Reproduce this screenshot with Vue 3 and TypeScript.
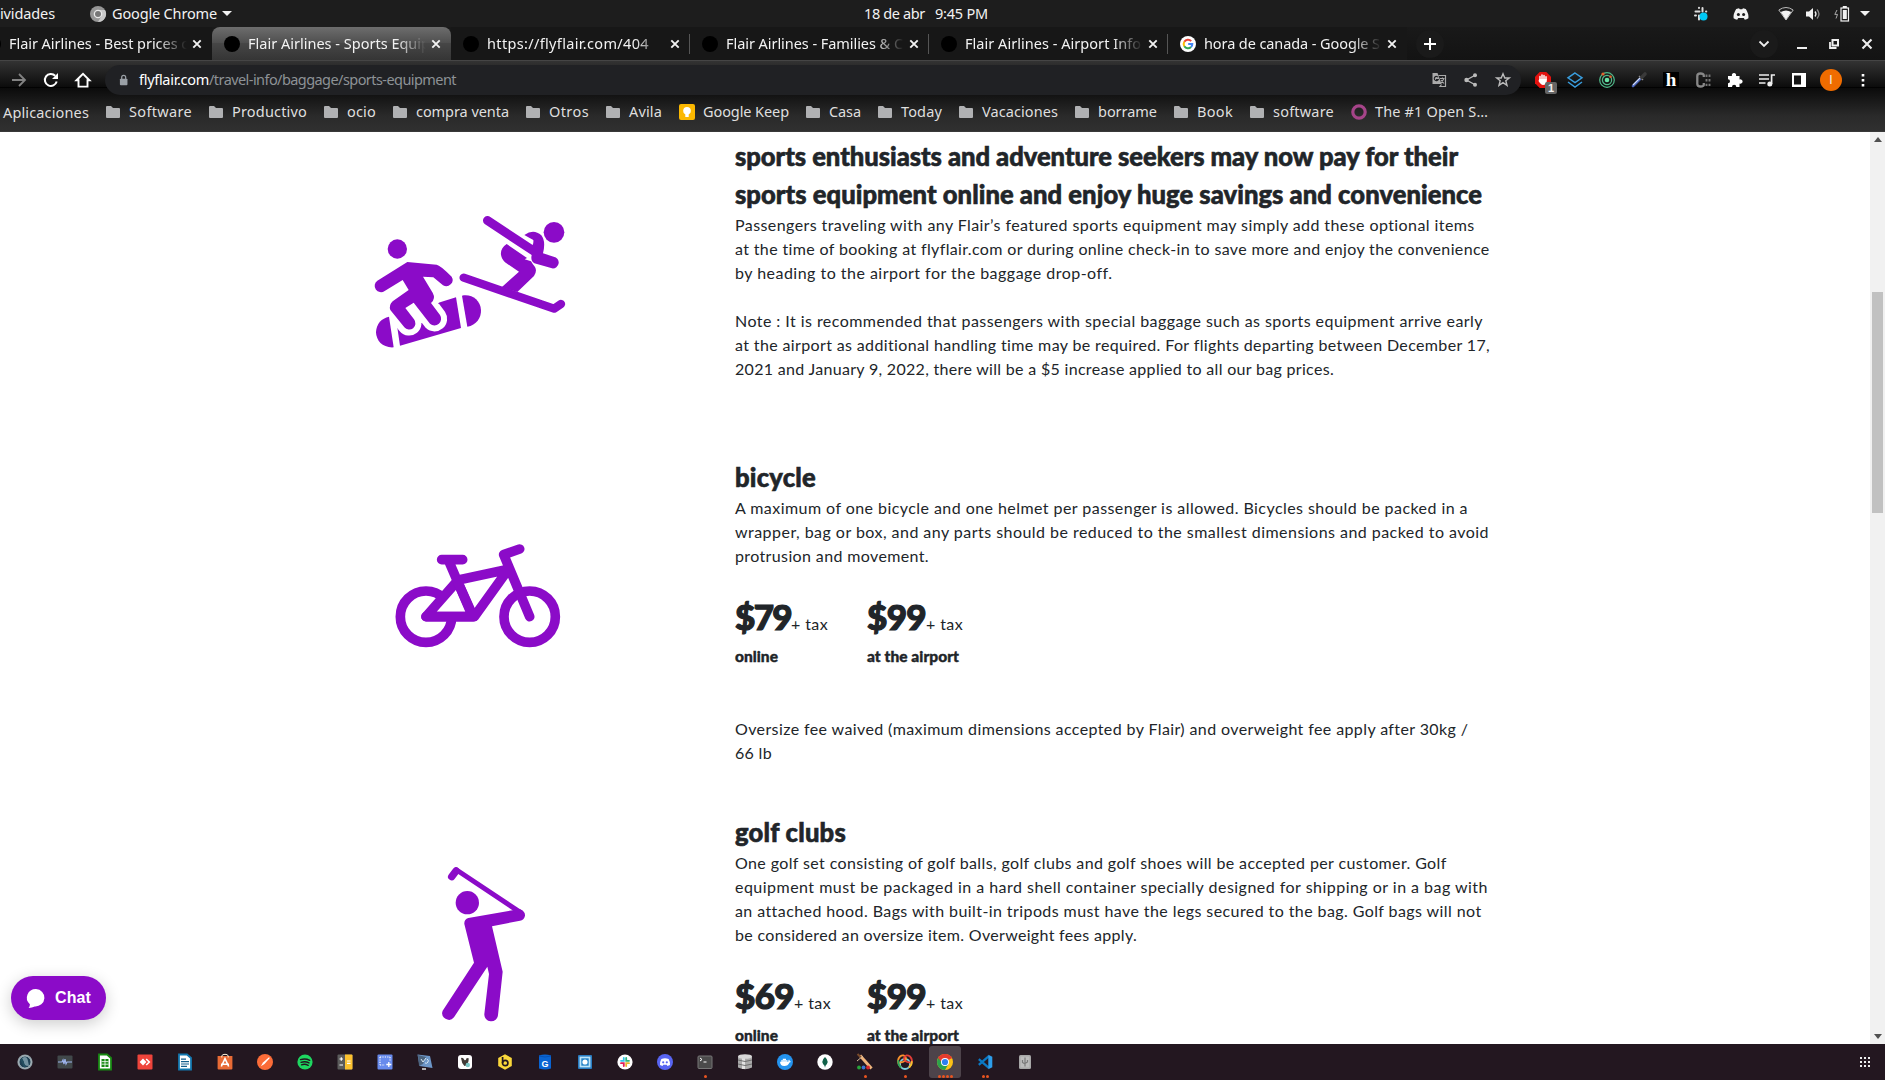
<script setup lang="ts">
interface Tab { title: string; width: number; google?: boolean; active?: boolean; divider?: boolean }
interface Bookmark { label: string; width: number; kind: 'folder' | 'keep' | 'ring' }
interface Line { text: string; width: number }
interface Price { amount: string; width: number; place: string; placeWidth: number; column: number }
interface DockItem { name: string; art: string; dots: number; active?: boolean }

// Tracks a single line of text so that it spans the given number of pixels.
const vFit = {
  mounted(el: HTMLElement, binding: { value: number }) {
    const natural = el.getBoundingClientRect().width
    const count = (el.textContent ?? '').length
    if (count > 0) el.style.letterSpacing = `${(binding.value - natural) / count}px`
  },
}

const tabs: Tab[] = [
  { title: 'Flair Airlines - Best prices o', width: 181 },
  { title: 'Flair Airlines - Sports Equip', width: 182, active: true },
  { title: 'https://flyflair.com/404', width: 162, divider: true },
  { title: 'Flair Airlines - Families & C', width: 177, divider: true },
  { title: 'Flair Airlines - Airport Info', width: 176, divider: true },
  { title: 'hora de canada - Google S', width: 176, google: true },
]

const bookmarks: Bookmark[] = [
  { label: 'Software', width: 63, kind: 'folder' },
  { label: 'Productivo', width: 75, kind: 'folder' },
  { label: 'ocio', width: 29, kind: 'folder' },
  { label: 'compra venta', width: 93, kind: 'folder' },
  { label: 'Otros', width: 40, kind: 'folder' },
  { label: 'Avila', width: 33, kind: 'folder' },
  { label: 'Google Keep', width: 86, kind: 'keep' },
  { label: 'Casa', width: 32, kind: 'folder' },
  { label: 'Today', width: 41, kind: 'folder' },
  { label: 'Vacaciones', width: 76, kind: 'folder' },
  { label: 'borrame', width: 59, kind: 'folder' },
  { label: 'Book', width: 36, kind: 'folder' },
  { label: 'software', width: 61, kind: 'folder' },
  { label: 'The #1 Open S…', width: 113, kind: 'ring' },
]

const introHeading: Line[] = [
  { text: 'sports enthusiasts and adventure seekers may now pay for their', width: 723 },
  { text: 'sports equipment online and enjoy huge savings and convenience', width: 747 },
]
const intro: Line[] = [
  { text: 'Passengers traveling with any Flair’s featured sports equipment may simply add these optional items', width: 740 },
  { text: 'at the time of booking at flyflair.com or during online check-in to save more and enjoy the convenience', width: 755 },
  { text: 'by heading to the airport for the baggage drop-off.', width: 377 },
]
const introNote: Line[] = [
  { text: 'Note : It is recommended that passengers with special baggage such as sports equipment arrive early', width: 748 },
  { text: 'at the airport as additional handling time may be required. For flights departing between December 17,', width: 756 },
  { text: '2021 and January 9, 2022, there will be a $5 increase applied to all our bag prices.', width: 599 },
]
const bicycle: Line[] = [
  { text: 'A maximum of one bicycle and one helmet per passenger is allowed. Bicycles should be packed in a', width: 733 },
  { text: 'wrapper, bag or box, and any parts should be reduced to the smallest dimensions and packed to avoid', width: 754 },
  { text: 'protrusion and movement.', width: 194 },
]
const oversize: Line[] = [
  { text: 'Oversize fee waived (maximum dimensions accepted by Flair) and overweight fee apply after 30kg /', width: 733 },
  { text: '66 lb', width: 37 },
]
const golf: Line[] = [
  { text: 'One golf set consisting of golf balls, golf clubs and golf shoes will be accepted per customer. Golf', width: 712 },
  { text: 'equipment must be packaged in a hard shell container specially designed for shipping or in a bag with', width: 753 },
  { text: 'an attached hood. Bags with built-in tripods must have the legs secured to the bag. Golf bags will not', width: 746 },
  { text: 'be considered an oversize item. Overweight fees apply.', width: 402 },
]
const bikePrices: Price[] = [
  { amount: '$79', width: 56, place: 'online', placeWidth: 43, column: 132 },
  { amount: '$99', width: 59, place: 'at the airport', placeWidth: 92, column: 140 },
]
const golfPrices: Price[] = [
  { amount: '$69', width: 59, place: 'online', placeWidth: 43, column: 132 },
  { amount: '$99', width: 59, place: 'at the airport', placeWidth: 92, column: 140 },
]

const chrome = '<circle cx="8" cy="8" r="8" fill="#fbc116"/><path d="M8 8L1.1 4A8 8 0 0 1 14.9 4Z" fill="#e33b2e"/><path d="M8 8L1.1 4A8 8 0 0 0 8 16L11.5 10Z" fill="#2ba24c"/><path d="M1.1 4L4.6 10L8 4.2Z" fill="#2ba24c"/><path d="M8 4.2H14.9A8 8 0 0 0 1.1 4L4.4 8Z" fill="#e33b2e"/><circle cx="8" cy="8" r="4" fill="#fff"/><circle cx="8" cy="8" r="3.1" fill="#2d7ff0"/>'

const dock: DockItem[] = [
  { name: 'timeshift', dots: 0, art: '<circle cx="8" cy="8" r="7.6" fill="#90a0a7"/><circle cx="8" cy="8" r="6" fill="#1f4154" stroke="#c4ced1" stroke-width=".7"/><path d="M5 4Q10 1 11 7L12 12Q6 12 7 8Z" fill="#7292a0"/><path d="M4 5L8 13" stroke="#244f60" stroke-width="2"/>' },
  { name: 'monitor', dots: 0, art: '<rect x=".5" y="1.5" width="15" height="13" rx="1" fill="#41484a"/><path d="M1 8H5L6 6L7 10L8 5L9 10L10 8H15" fill="none" stroke="#9fb5ee" stroke-width="1.2"/>' },
  { name: 'calc', dots: 0, art: '<path d="M2 .5H10L14 4V15.5H2Z" fill="#fff" stroke="#188a12" stroke-width="1.8"/><path d="M4.5 5H11.5V13H4.5Z" fill="#188a12"/><path d="M4.5 7.6H11.5M4.5 10.2H11.5M8 5V13" stroke="#fff" stroke-width=".8"/>' },
  { name: 'anydesk', dots: 0, art: '<rect x=".5" y=".5" width="15" height="15" rx="1" fill="#ef443b"/><path d="M6 4.6L9.4 8L6 11.4L2.6 8Z" fill="#fff"/><path d="M9.2 5L12.3 8L9.2 11" fill="none" stroke="#fff" stroke-width="1.6"/>' },
  { name: 'writer', dots: 0, art: '<path d="M2 .5H10L14 4V15.5H2Z" fill="#fff" stroke="#1378b0" stroke-width="1.8"/><path d="M4 5.2H9M4 7.6H12M4 10H12M4 12.4H10" stroke="#125d8b" stroke-width="1.2"/>' },
  { name: 'software', dots: 0, art: '<path d="M.6 2H15.4V14.5Q15.4 15.5 14.4 15.5H1.6Q.6 15.5 .6 14.5Z" fill="#e86b35"/><path d="M4.8 3.5V2Q5 .3 8 .3Q11 .3 11.2 2V3.5" fill="none" stroke="#fff3dc" stroke-width="1"/><path d="M4.3 12.5L8 4.6L11.7 12.5M4 10.3H12" fill="none" stroke="#fff" stroke-width="1.6"/>' },
  { name: 'postman', dots: 0, art: '<circle cx="8" cy="8" r="8" fill="#fb6c38"/><path d="M3.8 12.2L6 8.5L12 3.2L12.8 4L7.5 10Z" fill="#fff"/>' },
  { name: 'spotify', dots: 0, art: '<circle cx="8" cy="8" r="7.6" fill="#1ed760"/><path d="M3.5 5.6Q8.5 4 12.7 6.3M4 8.3Q8.3 6.8 12 8.9M4.5 10.8Q8 9.6 11.2 11.3" fill="none" stroke="#231720" stroke-width="1.4" stroke-linecap="round"/>' },
  { name: 'calculator', dots: 0, art: '<rect x=".5" y=".5" width="15" height="15" rx="1" fill="#5b5b5b"/><path d="M8 .5H14.5Q15.5 .5 15.5 1.5V14.5Q15.5 15.5 14.5 15.5H8Z" fill="#fdc22f"/><path d="M2.5 5H6M4.3 3.2V6.8M2.5 11H6M10 7H13.5M10 9.3H13.5" stroke="#fff" stroke-width="1.2"/>' },
  { name: 'screenshot', dots: 0, art: '<rect x=".5" y=".5" width="15" height="15" rx="1" fill="#688bed"/><path d="M3 3H13M3 3V11M13 3V7M3 11H8" stroke="#fff" stroke-width="1.2" stroke-dasharray="1.2 1.2"/><path d="M11.8 8V13M9.3 10.5H14.3" stroke="#fff" stroke-width="1.3"/>' },
  { name: 'tools', dots: 0, art: '<path d="M.5 .5L13 2L15.5 14L2.5 12Z" fill="#6d97c8"/><path d="M1 1L9 3L6 10L2 12Z" fill="#4c647e"/><path d="M4 5L6 8L9 4M8 9A2.2 2.2 0 1 0 10 5" fill="none" stroke="#d7e7f2"/><path d="M5 15H9" stroke="#b1b1b1" stroke-width="2"/>' },
  { name: 'dbeaver', dots: 0, art: '<rect x="1" y="1" width="14" height="14" rx="3" fill="#fff"/><path d="M4 4Q6 3 7.4 6Q9 7 9.5 4.2L11.5 4Q12.3 8 9 11.5L7.4 12Q4.5 9 4 4Z" fill="#423b37"/><circle cx="10.8" cy="11" r="2.2" fill="#7bc8c7"/>' },
  { name: 'beekeeper', dots: 0, art: '<path d="M8 .2L14.8 4V12L8 15.8L1.2 12V4Z" fill="#fad83b"/><circle cx="8.2" cy="9" r="2.7" fill="none" stroke="#231720" stroke-width="1.7"/><path d="M5.6 3V9" stroke="#231720" stroke-width="1.7"/>' },
  { name: 'gdocs', dots: 0, art: '<path d="M2 1.5Q8 -.5 14 1.5V14.5Q8 16.5 2 14.5Z" fill="#0964d2"/><path d="M2 2Q8 4 14 2" fill="none" stroke="#0551b5"/><text x="8" y="12.5" text-anchor="middle" fill="#fff" font-family="Liberation Sans" font-size="9" font-weight="700">G</text>' },
  { name: 'vm', dots: 0, art: '<rect x="1" y="1" width="14" height="14" rx="1" fill="#287cc1"/><rect x="2.6" y="2.6" width="10.8" height="10.8" fill="#bce5fa"/><rect x="4.3" y="4.3" width="7.4" height="7.4" fill="#2584c8"/><circle cx="8" cy="8" r="2.6" fill="#fff"/>' },
  { name: 'slack', dots: 0, art: '<circle cx="8" cy="8" r="7.6" fill="#fff"/><g fill="none" stroke-width="1.8" stroke-linecap="round"><path d="M6.8 4V6.8H4" stroke="#36c5f0"/><path d="M9.2 4V6.8H12" stroke="#2eb67d"/><path d="M6.8 12V9.2H4" stroke="#e01e5a"/><path d="M9.2 12V9.2H12" stroke="#ecb22e"/></g>' },
  { name: 'discord', dots: 0, art: '<circle cx="8" cy="8" r="8" fill="#5865f2"/><path d="M4.4 5Q8 3.5 11.6 5Q13.4 8 13 11L10.5 12L9.7 10.8H6.3L5.5 12L3 11Q2.6 8 4.4 5Z" fill="#fff"/><circle cx="6.2" cy="8.3" r="1.1" fill="#5865f2"/><circle cx="9.8" cy="8.3" r="1.1" fill="#5865f2"/>' },
  { name: 'terminal', dots: 1, art: '<rect x="1" y="2" width="14" height="12.5" rx="1" fill="#4b4b4b" stroke="#777"/><path d="M3 4L5 5.5L3 7M6.5 8H9.5" fill="none" stroke="#fff"/>' },
  { name: 'database', dots: 0, art: '<path d="M1 2.5V13.5Q8 17 15 13.5V2.5Z" fill="#aaa"/><path d="M5 3V15H8V3Z" fill="#e2e2e2"/><path d="M1 6Q8 9 15 6M1 10Q8 13 15 10" fill="none" stroke="#666" stroke-width=".9"/><ellipse cx="8" cy="2.5" rx="7" ry="2.3" fill="#d8d8d8"/>' },
  { name: 'docker', dots: 0, art: '<circle cx="8" cy="8" r="8" fill="#2493ee"/><path d="M3 7.8H11.3Q11.3 6 12 5.6Q12.8 6.2 12.8 7.2L14 7.4Q13.5 8.5 12.5 8.5Q11 12 7.3 12Q3.2 12 3 7.8Z" fill="#fff"/><path d="M4.2 7H10.5M5.8 5.4H9" stroke="#fff" stroke-width="1.4"/>' },
  { name: 'mongo', dots: 0, art: '<circle cx="8" cy="8" r="7.7" fill="#fff"/><path d="M8 3Q13 7.5 8.3 12V13.3H7.7V12Q3 7.5 8 3Z" fill="#116149"/>' },
  { name: 'paint', dots: 1, art: '<path d="M3 1.5L14.5 14.5" stroke="#efb47c" stroke-width="3"/><path d="M.5 0L4 3.5" stroke="#7b4b2a" stroke-width="2"/><path d="M0 7L6 2" stroke="#d9bd9b"/><circle cx="2" cy="13.5" r="1.9" fill="#27a23a"/><circle cx="6.5" cy="13.5" r="1.9" fill="#3774d3"/><circle cx="11" cy="13.5" r="1.9" fill="#d4232d"/>' },
  { name: 'rings', dots: 1, art: '<g fill="none" stroke-width="1.8" stroke-linecap="round"><circle cx="8" cy="10" r="5" stroke="#7fd3e0"/><path d="M3.5 13Q-1.5 7 3 2.5Q7 -.5 9 4Q9.5 8 3 8.5" stroke="#f8922d"/><path d="M12.5 13Q17.5 7 13 2.5Q9 -.5 7 4Q6.5 8 13 8.5" stroke="#e33d38"/><path d="M3.5 13Q1 10.5 1.2 7" stroke="#28a85b"/><path d="M12.5 13Q15 10.5 14.8 8" stroke="#f2c530"/></g>' },
  { name: 'chrome', dots: 4, active: true, art: chrome },
  { name: 'vscode', dots: 2, art: '<path d="M1.8 5.2L11.8 13.8M1.8 10.8L11.8 2.2" stroke="#0b79c4" stroke-width="2.3"/><path d="M11.3 .8V15.2L15.3 13.3V2.7Z" fill="#2d9eeb"/>' },
  { name: 'usb', dots: 0, art: '<rect x="2" y="1" width="12" height="14" rx="1.5" fill="#a7a7a7"/><rect x="3.5" y="2.5" width="9" height="11" fill="#bcbcbc"/><path d="M8 3.5V12.5M5.5 6V8.5L8 10M10.5 6V8L8 9.5" fill="none" stroke="#7b7b7b" stroke-width="1.2"/>' },
]

const gridCells = Array.from({ length: 9 }, (_, i) => i)
</script>

<template>
  <div class="screen">
    <header class="topbar">
      <div class="top-left">
        <span class="activities"><span v-fit="55">ividades</span></span>
        <svg class="i16" viewBox="0 0 16 16"><circle cx="8" cy="8" r="8" fill="#969696" /><path d="M8 4H15A8 8 0 0 1 8 16L11.5 10Z" fill="#c9c9c9" /><circle cx="8" cy="8" r="4.3" fill="#e9e9e9" /><circle cx="8" cy="8" r="3" fill="#777" /></svg>
        <span class="app-name"><span v-fit="105">Google Chrome</span></span>
        <i class="caret" />
      </div>
      <div class="clock"><span v-fit="61">18 de abr</span><span class="time"><span v-fit="53">9:45 PM</span></span></div>
      <div class="tray">
        <svg class="i16 slack" viewBox="0 0 16 16"><g stroke="#ddd" stroke-width="2" stroke-linecap="round" fill="none"><path d="M6 1.8V2M2.5 5.5H6.5M9.5 2V5.5M13 5.5H13.3M2 9.5H3M6 9.5V13.5" /></g><circle cx="10.5" cy="10.5" r="4" fill="#00c8f5" /></svg>
        <svg class="i16 disc" viewBox="0 0 16 16"><path d="M3.2 3L6 2.2L6.8 3.3H9.2L10 2.2L12.8 3Q16 8 15.4 12.2Q13.6 13.6 11.8 13.8L10.8 12H5.2L4.2 13.8Q2.4 13.6.6 12.2Q0 8 3.2 3Z" fill="#f2f2f2" /><circle cx="5.4" cy="8.4" r="1.5" fill="#1d1d1d" /><circle cx="10.6" cy="8.4" r="1.5" fill="#1d1d1d" /></svg>
        <svg class="i16 wifi" viewBox="0 0 16 16"><path d="M.8 4Q8 -1 15.2 4L8 14Z" fill="none" stroke="#bbb" /><path d="M2.8 6Q8 3 13.2 6L8 13.8Z" fill="#f2f2f2" /></svg>
        <svg class="i16 vol" viewBox="0 0 16 16"><path d="M1 5.5H4L8 2V14L4 10.5H1Z" fill="#f2f2f2" /><path d="M10 5.5Q12 8 10 10.5" fill="none" stroke="#f2f2f2" stroke-width="1.3" /><path d="M12 3.5Q16 8 12 12.5" fill="none" stroke="#888" stroke-width="1.3" /></svg>
        <svg class="i16 bat" viewBox="0 0 16 16"><path d="M3 4L.8 8.4H3.5L2 12.5" fill="none" stroke="#aaa" /><rect x="7" y="2" width="7.5" height="13" fill="none" stroke="#f2f2f2" stroke-width="1.2" /><path d="M8.8 4H12.8V13H8.8ZM8.8 0H12.8V2H8.8Z" fill="#f2f2f2" /></svg>
        <i class="caret" />
      </div>
    </header>

    <div class="tabstrip">
      <div v-for="(t, i) in tabs" :key="i" class="tab" :class="{ active: t.active, divided: t.divider }">
        <svg v-if="t.google" class="favicon" viewBox="0 0 16 16"><circle cx="8" cy="8" r="8" fill="#fff" /><g fill="none" stroke-width="2"><path d="M4.3 5.8A4.3 4.3 0 0 1 11.2 5.1" stroke="#ea4335" /><path d="M4.3 10.2A4.3 4.3 0 0 1 4.3 5.8" stroke="#fbbc05" /><path d="M11 11A4.3 4.3 0 0 1 4.3 10.2" stroke="#34a853" /><path d="M8.2 8H12.3Q12.3 10 11 11" stroke="#4285f4" /></g></svg>
        <i v-else class="favicon blank" />
        <div class="title"><span v-fit="t.width">{{ t.title }}</span></div>
        <svg class="close" viewBox="0 0 10 10"><path d="M1.3 1.3L8.7 8.7M8.7 1.3L1.3 8.7" stroke="#f2f2f2" stroke-width="1.9" /></svg>
      </div>
      <div class="round plus"><svg class="i16" viewBox="0 0 16 16"><path d="M8 2V14M2 8H14" stroke="#fff" stroke-width="2" /></svg></div>
      <div class="window">
        <div class="round"><svg class="i16" viewBox="0 0 16 16"><path d="M3.5 5.5L8 10L12.5 5.5" fill="none" stroke="#eee" stroke-width="1.8" /></svg></div>
        <svg class="i16 min" viewBox="0 0 16 16"><path d="M3 12H13" stroke="#eee" stroke-width="2" /></svg>
        <svg class="i16 rest" viewBox="0 0 16 16"><path d="M6.5 4H12V9.5H6.5Z" fill="none" stroke="#eee" stroke-width="2" /><path d="M4 6V12H10.5" fill="none" stroke="#eee" stroke-width="1.8" /></svg>
        <svg class="i16 quit" viewBox="0 0 16 16"><path d="M3.5 3.5L12.5 12.5M12.5 3.5L3.5 12.5" stroke="#eee" stroke-width="2.1" /></svg>
      </div>
    </div>

    <div class="toolbar">
      <div class="nav">
        <svg class="i16" viewBox="0 0 16 16"><path d="M1 8H14M8 2L14 8L8 14" fill="none" stroke="#828282" stroke-width="1.8" /></svg>
        <svg class="i16" viewBox="0 0 16 16"><path d="M13.7 9.5A6 6 0 1 1 12.2 3.7" fill="none" stroke="#fff" stroke-width="2" /><path d="M15 1V7H9Z" fill="#fff" /></svg>
        <svg class="i16" viewBox="0 0 16 16"><path d="M1.5 8.2L8 1.8L14.5 8.2H12.5V14.6H3.5V8.2Z" fill="none" stroke="#fff" stroke-width="1.9" /></svg>
      </div>
      <div class="omnibox">
        <svg class="lock" viewBox="0 0 10 12"><rect x="1" y="4.5" width="8.4" height="7.3" rx="1" fill="#9aa0a6" /><path d="M3 5V3Q3 .8 5.2 .8Q7.4 .8 7.4 3V5" fill="none" stroke="#9aa0a6" stroke-width="1.4" /></svg>
        <div class="url"><span v-fit="70" class="host">flyflair.com</span><span v-fit="247">/travel-info/baggage/sports-equipment</span></div>
        <div class="box-icons">
          <svg class="i16" viewBox="0 0 16 16"><path d="M1.5 1H6.5L10.5 12H1.5Z" fill="#aaa" /><path d="M7.5 3.5H14.5V14.5H9L10.5 12.5" fill="none" stroke="#aaa" stroke-width="1.2" /><path d="M9 6.5H13.5M11.5 5.5V6.5M12.8 7L9.5 11.5M10 8L13 11.5" stroke="#aaa" stroke-width="1.1" /><path d="M7.1 5.3A2.1 2.1 0 1 0 7.2 7.6H5" stroke="#202124" fill="none" stroke-width="1.1" /></svg>
          <svg class="i16" viewBox="0 0 16 16"><path d="M12.5 3L3.5 8L12.5 13" fill="none" stroke="#bbb" stroke-width="1.4" /><circle cx="3.5" cy="8" r="2.2" fill="#bbb" /><circle cx="12" cy="3.2" r="2" fill="#bbb" /><circle cx="12" cy="12.8" r="2" fill="#bbb" /></svg>
          <svg class="i16" viewBox="0 0 16 16"><path d="M8 1.8L9.8 6H14.3L10.8 8.8L12 13.4L8 10.7L4 13.4L5.2 8.8L1.7 6H6.2Z" fill="none" stroke="#bbb" stroke-width="1.4" /></svg>
        </div>
      </div>
      <div class="extensions">
        <span class="adblock"><svg class="i16" viewBox="0 0 16 16"><path d="M4.7 0H11.3L16 4.7V11.3L11.3 16H4.7L0 11.3V4.7Z" fill="#e4120f" /><path d="M5 8V4.5M7 7V3M9 7V3.4M11 8V4.8" stroke="#fff" stroke-width="1.5" stroke-linecap="round" /><path d="M4.3 7H11.7V10Q11 13 8 13Q6 13 3.5 9Z" fill="#fff" /></svg><b>1</b></span>
        <svg class="i16" viewBox="0 0 16 16"><path d="M8 1L15 5.8L8 10.6L1 5.8ZM1 10L8 15L15 10" fill="none" stroke="#399ddd" stroke-width="1.5" /></svg>
        <svg class="i16" viewBox="0 0 16 16"><g fill="none" stroke="#50b98a" stroke-width="1.2"><circle cx="8" cy="8" r="7.3" /><circle cx="8" cy="8" r="4.6" /></g><circle cx="8" cy="8" r="2.3" fill="#67e3a5" /><circle cx="4" cy="2" r="1.6" fill="#e4622e" /><circle cx="11.5" cy="4.8" r="1.3" fill="#e4622e" /></svg>
        <svg class="i16" viewBox="0 0 16 16"><path d="M2 14L9 7" stroke="#4a63b8" stroke-width="2.6" stroke-linecap="round" /><path d="M2 13L9 6" stroke="#d2def8" stroke-width="1.1" /><path d="M8 4L12 8" stroke="#888" stroke-width="1.5" /><path d="M10.8 5.2L14 2" stroke="#3a3a3a" stroke-width="3.6" stroke-linecap="round" /></svg>
        <svg class="i16" viewBox="0 0 16 16"><rect width="16" height="16" fill="#000" /><text x="8" y="14" text-anchor="middle" font-family="Liberation Serif" font-size="19" font-weight="700" fill="#fff">h</text></svg>
        <svg class="i16" viewBox="0 0 16 16"><path d="M8.8 5V3.5Q8.8 1.5 5.5 1.5Q2.3 1.5 2.3 4V12Q2.3 14.5 5.5 14.5Q8.8 14.5 8.8 12.5V11" fill="none" stroke="#888" stroke-width="2.3" /><path d="M11.5 2.5V14M14.5 2.5V14" stroke="#777" stroke-width="1.9" stroke-dasharray="2.4 2.2" /></svg>
        <svg class="i16" viewBox="0 0 16 16"><path d="M1 4H5A2.2 2.2 0 1 1 9 4H12.5V7.5A2.2 2.2 0 1 1 12.5 11.5V15H9.3A2.1 2.1 0 0 0 5 15H1V11.2A2 2 0 0 0 1 7.2Z" fill="#fff" /></svg>
        <svg class="i16" viewBox="0 0 16 16"><path d="M0 3H10M0 7H10M0 11H6.5M12.6 12V3H16" fill="none" stroke="#eee" stroke-width="1.7" /><circle cx="10.8" cy="12" r="2.5" fill="#eee" /></svg>
        <svg class="i16" viewBox="0 0 16 16"><path d="M1 1H15V15H1Z" fill="#fff" /><path d="M3 3.5H10V12.5H3Z" fill="#151515" /></svg>
        <span class="avatar">I</span>
        <svg class="i16" viewBox="0 0 16 16"><path d="M6.7 2H9.3V4.5H6.7ZM6.7 7H9.3V9.5H6.7ZM6.7 12H9.3V14.5H6.7Z" fill="#fff" /></svg>
      </div>
    </div>

    <nav class="bookmarks">
      <span class="apps"><span v-fit="86">Aplicaciones</span></span>
      <span v-for="(b, i) in bookmarks" :key="i" class="bookmark" :class="b.kind">
        <svg v-if="b.kind === 'folder'" viewBox="0 0 14 12"><path d="M0 1Q0 0 1 0H5L7 2H13Q14 2 14 3V11Q14 12 13 12H1Q0 12 0 11Z" fill="#b0b1b3" /></svg>
        <svg v-else-if="b.kind === 'keep'" viewBox="0 0 16 16"><rect width="16" height="16" rx="2" fill="#fbb800" /><circle cx="8" cy="6.8" r="3.8" fill="#fff" /><path d="M6.3 10H9.7V13H6.3Z" fill="#fff" /></svg>
        <svg v-else viewBox="0 0 16 16"><circle cx="8" cy="8" r="6.2" fill="none" stroke="#a64489" stroke-width="3.2" /></svg>
        <span v-fit="b.width">{{ b.label }}</span>
      </span>
    </nav>

    <div class="viewport">
      <main class="page">
        <section class="block intro">
          <div class="art">
            <svg class="ski" viewBox="0 0 720 480" fill="#8b0bc8">
              <path d="M137 349L150 437L333 384L318 292Z" />
              <path d="M172 186L260 194Q270 195 305 230A19 19 0 0 1 279 256L250 232L219 230L248 278Q258 296 243 309L270 345A20 20 0 0 1 240 371L191 308L166 324L192 358A18 18 0 0 1 163 382L121 330Q116 315 128 304L176 270L158 240L104 273A19 19 0 0 1 82 242Z" stroke="#fff" stroke-width="36" stroke-linejoin="round" />
              <path d="M172 186L260 194Q270 195 305 230A19 19 0 0 1 279 256L250 232L219 230L248 278Q258 296 243 309L270 345A20 20 0 0 1 240 371L191 308L166 324L192 358A18 18 0 0 1 163 382L121 330Q116 315 128 304L176 270L158 240L104 273A19 19 0 0 1 82 242Z" />
              <path d="M117 350L131 442C98 444 79 423 78 397C79 370 95 355 117 350Z" />
              <path d="M336 287L352 380C379 376 394 353 393 330C391 300 365 281 336 287Z" />
              <circle cx="142" cy="147" r="29" />
              <circle cx="612" cy="97" r="31" />
              <path d="M523 105Q551 85 574 106Q588 123 579 160L611 170A17 17 0 0 1 606 205L553 190Q541 183 545 165L404 72A13 13 0 0 1 421 51L548 135Q551 128 550 120Q537 113 523 105Z" />
              <path d="M470 132L531 174L524 178L543 184Q548 193 555 201Q562 213 552 228L502 276L455 262L507 215L465 187C446 168 450 144 470 132Z" />
              <path d="M341 233L612 326L633 312" fill="none" stroke="#8b0bc8" stroke-width="25" stroke-linecap="round" stroke-linejoin="round" />
            </svg>
          </div>
          <div class="copy">
            <h2><span v-for="l in introHeading" :key="l.text" class="line"><span v-fit="l.width">{{ l.text }}</span></span></h2>
            <p><span v-for="l in intro" :key="l.text" class="line"><span v-fit="l.width">{{ l.text }}</span></span></p>
            <p class="spaced"><span v-for="l in introNote" :key="l.text" class="line"><span v-fit="l.width">{{ l.text }}</span></span></p>
          </div>
        </section>

        <section class="block bike-block">
          <div class="art">
            <svg class="bike" viewBox="0 0 600 420" fill="none" stroke="#8b0bc8" stroke-width="29" stroke-linecap="round" stroke-linejoin="round">
              <circle cx="138" cy="290" r="77" /><circle cx="449" cy="290" r="77" />
              <path d="M138 290L232 183L280 290Z" fill="#fff" />
              <path d="M138 290H283L385 148L235 180M207 125L278 290M185 119H248M419 87L371 104L449 290" />
            </svg>
          </div>
          <div class="copy">
            <h2><span class="line"><span v-fit="81">bicycle</span></span></h2>
            <p><span v-for="l in bicycle" :key="l.text" class="line"><span v-fit="l.width">{{ l.text }}</span></span></p>
            <div class="prices">
              <div v-for="p in bikePrices" :key="p.amount" class="price" :style="{ width: p.column + 'px' }">
                <div class="amount"><span class="sum" v-fit="p.width">{{ p.amount }}</span><span class="tax" v-fit="37">+ tax</span></div>
                <div class="place"><span v-fit="p.placeWidth">{{ p.place }}</span></div>
              </div>
            </div>
            <p class="oversize"><span v-for="l in oversize" :key="l.text" class="line"><span v-fit="l.width">{{ l.text }}</span></span></p>
          </div>
        </section>

        <section class="block golf-block">
          <div class="art">
            <svg class="golfer" viewBox="0 0 390 540" fill="#8b0bc8">
              <circle cx="142" cy="158" r="35" />
              <path d="M95 80L108 63" stroke="#8b0bc8" stroke-width="22" stroke-linecap="round" />
              <path d="M110 60L302 188" stroke="#8b0bc8" stroke-width="15" stroke-linecap="round" />
              <path d="M145 204L282 180L300 178Q316 184 315 197Q312 210 300 212L216 229L248 365L234 495A20 20 0 0 1 193 492L207 372L202 350L102 502A20 20 0 0 1 68 482L162 338L133 222Q132 208 145 204Z" />
            </svg>
          </div>
          <div class="copy">
            <h2><span class="line"><span v-fit="111">golf clubs</span></span></h2>
            <p><span v-for="l in golf" :key="l.text" class="line"><span v-fit="l.width">{{ l.text }}</span></span></p>
            <div class="prices">
              <div v-for="p in golfPrices" :key="p.amount" class="price" :style="{ width: p.column + 'px' }">
                <div class="amount"><span class="sum" v-fit="p.width">{{ p.amount }}</span><span class="tax" v-fit="37">+ tax</span></div>
                <div class="place"><span v-fit="p.placeWidth">{{ p.place }}</span></div>
              </div>
            </div>
          </div>
        </section>
      </main>
      <aside class="scrollbar"><i class="up" /><i class="thumb" /><i class="down" /></aside>
      <button class="chat">
        <svg viewBox="0 0 18 19"><path d="M9 0A9 8.7 0 1 1 7.8 17.4Q5 18.8 1.6 19Q3 17.3 2.9 15.2A9 8.7 0 0 1 9 0Z" fill="#fff" /></svg>
        <span v-fit="36">Chat</span>
      </button>
    </div>

    <footer class="dock">
      <div v-for="d in dock" :key="d.name" class="app" :class="{ active: d.active }">
        <svg class="i16" viewBox="0 0 16 16" v-html="d.art" />
        <span class="dots"><i v-for="n in d.dots" :key="n" /></span>
      </div>
      <div class="grid"><i v-for="n in gridCells" :key="n" /></div>
    </footer>
  </div>
</template>

<style>
body { margin: 0; overflow: hidden; background: #fff; }
</style>

<style scoped>
.screen { width: 1885px; height: 1080px; display: flex; flex-direction: column; overflow: hidden; font-family: "Noto Sans", "Open Sans", sans-serif; font-size: 14.5px; color: #f2f2f2; white-space: nowrap; }
svg { display: block; flex: none; overflow: visible; }
.i16 { width: 16px; height: 16px; }
.topbar { height: 27px; flex: none; background: #1d1d1d; display: flex; align-items: center; line-height: 24px; }
.topbar span { display: inline-block; height: 26px; }
.top-left { display: flex; align-items: center; width: 864px; flex: none; }
.activities { width: 90px; }
.app-name { width: 110px; margin-left: 6px; }
.caret { width: 0; height: 0; border: 5px solid transparent; border-top-color: #f2f2f2; border-bottom: 0; }
.clock { display: flex; }
.time { margin-left: 10px; }
.tray { display: flex; align-items: center; padding-right: 15px; margin-left: auto; }
.disc { margin-left: 24px; }
.wifi { margin-left: 29px; }
.vol { margin-left: 11px; }
.bat { margin: 0 10px 0 13px; }

.tabstrip { height: 33px; flex: none; display: flex; align-items: center; background: linear-gradient(#191919, #131313); }
.tab { width: 239px; height: 33px; flex: none; box-sizing: border-box; display: flex; align-items: center; padding-left: 12px; position: relative; background: #171717; }
.tab:first-child { margin-left: -27px; }
.tab.active { background: linear-gradient(#6d6d6d, #4f4f4f 48%, #464646 50%, #353535); border-radius: 8px 8px 0 0; }
.tab.divided::after { content: ""; position: absolute; right: 0; top: 7px; width: 1px; height: 20px; background: #555; }
.favicon { width: 16px; height: 16px; flex: none; }
.blank { border-radius: 50%; background: #000; }
.title { width: 183px; margin-left: 8px; overflow: hidden; line-height: 33px; -webkit-mask-image: linear-gradient(90deg, #000 148px, transparent 178px); mask-image: linear-gradient(90deg, #000 148px, transparent 178px); }
.close { width: 10px; height: 10px; }
.round { width: 28px; height: 28px; border-radius: 50%; background: #1a1a1a; display: grid; place-items: center; flex: none; }
.plus { margin-left: 9px; }
.window { margin-left: auto; display: flex; align-items: center; padding-right: 10px; }
.min { margin-left: 16px; }
.rest { margin-left: 16px; }
.quit { margin-left: 17px; }

.toolbar { height: 28px; flex: none; box-sizing: border-box; border-top: 1px solid #454545; border-bottom: 1px solid #020202; background: linear-gradient(#333, #0c0c0c); display: flex; align-items: center; padding-top: 11px; position: relative; z-index: 1; }
.nav { display: flex; gap: 16px; padding-left: 11px; width: 94px; flex: none; }
.omnibox { width: 1416px; height: 30px; flex: none; box-sizing: border-box; background: #202124; border-radius: 15px; display: flex; align-items: center; padding: 0 10px 0 14px; }
.lock { width: 9px; height: 12px; }
.url { margin-left: 11px; height: 30px; color: #8d9296; display: flex; line-height: 28px; }
.host { color: #fff; }
.box-icons { display: flex; gap: 16px; margin-left: auto; }
.extensions { display: flex; align-items: center; justify-content: space-between; width: 336px; margin-left: 14px; flex: none; }
.adblock { position: relative; }
.adblock b { position: absolute; left: 10px; top: 10px; width: 12px; height: 12px; border-radius: 2px; background: #656565; font: 700 11px/12px "Liberation Sans", sans-serif; text-align: center; }
.avatar { width: 22px; height: 22px; margin: 0 -3px; border-radius: 50%; background: #ef6c00; font: 12px/22px "Liberation Sans", sans-serif; text-align: center; }

.bookmarks { height: 44px; flex: none; box-sizing: border-box; padding: 5px 0 0 3px; background: linear-gradient(#0b0b0b, #2a2a2a 65%, #303030); display: flex; align-items: center; color: #dfdfdf; border-bottom: 1px solid #393939; }
.bookmarks span { line-height: 20px; padding-bottom: 1px; }
.bookmarks svg { margin-top: 1px; }
.apps { width: 103px; flex: none; }
.bookmark { display: flex; align-items: center; margin-right: 17px; flex: none; }
.bookmark svg { width: 14px; height: 12px; margin-right: 9px; }
.bookmark.keep svg, .bookmark.ring svg { width: 16px; height: 16px; margin-right: 8px; }

.viewport { height: 912px; flex: none; display: flex; position: relative; overflow: hidden; background: #fff; color: #212529; font-family: Lato, sans-serif; }
.page { width: 1870px; flex: none; }
.block { display: flex; }
.intro { height: 324px; }
.bike-block { height: 354px; }
.art { width: 735px; flex: none; box-sizing: border-box; }
.ski { width: 240px; height: 160px; margin: 68px 0 0 350px; }
.bike { width: 200px; height: 140px; margin: 64px 0 0 380px; }
.golfer { width: 130px; height: 180px; margin: 40px 0 0 420px; }
.copy { padding-top: 2px; }
.intro .copy { padding-top: 5px; }
.golf-block .copy { padding-top: 3px; }
h2 { margin: 0; font-size: 25.6px; line-height: 38.4px; font-weight: 900; -webkit-text-stroke: .6px #212529; }
p { margin: -1px 0 0; font-size: 16px; line-height: 24px; }
.bike-block p, .golf-block p { margin-top: 0; }
.line { display: block; }
.line > span, .place > span { display: inline-block; }
.intro p.spaced { margin-top: 24px; }
.prices { display: flex; margin-top: 22px; height: 84px; }
.amount { height: 54px; line-height: 52px; display: flex; align-items: baseline; }
.sum { font-size: 35px; font-weight: 900; -webkit-text-stroke: 1.2px #212529; }
.tax { font-size: 16px; }
.place { font-size: 15.5px; font-weight: 900; line-height: 24px; -webkit-text-stroke: .4px #212529; }
.bike-block p.oversize { margin-top: 43px; }
.scrollbar { width: 15px; flex: none; background: #f1f1f1; display: flex; flex-direction: column; align-items: center; }
.up { border: 4px solid transparent; border-top: 0; border-bottom: 5px solid #505050; margin-top: 5px; }
.thumb { width: 11px; height: 221px; background: #c1c1c1; margin-top: 150px; }
.down { border: 4px solid transparent; border-bottom: 0; border-top: 5px solid #505050; margin-top: auto; margin-bottom: 5px; }
.chat { position: absolute; left: 11px; top: 844px; width: 95px; height: 44px; border: 0; border-radius: 22px; background: #8b0bc8; box-shadow: 0 4px 16px rgba(0, 0, 0, .2); display: flex; align-items: center; padding: 0 0 0 16px; color: #fff; font: 700 16px "Liberation Sans", sans-serif; }
.chat svg { width: 18px; height: 19px; margin-right: 10px; }

.dock { height: 36px; flex: none; background: #231720; display: flex; align-items: center; padding-left: 9px; }
.app { width: 32px; height: 32px; margin-right: 8px; display: grid; place-items: center; border-radius: 3px; position: relative; flex: none; }
.app.active { background: #4d434a; }
.dots { position: absolute; bottom: 0; left: 0; right: 0; display: flex; justify-content: center; gap: 1px; }
.dots i { width: 3px; height: 3px; border-radius: 50%; background: #e95420; }
.grid { margin-left: auto; margin-right: 15px; display: grid; grid-template-columns: repeat(3, 2px); gap: 2px; }
.grid i { width: 2px; height: 2px; background: #eee; }
</style>
